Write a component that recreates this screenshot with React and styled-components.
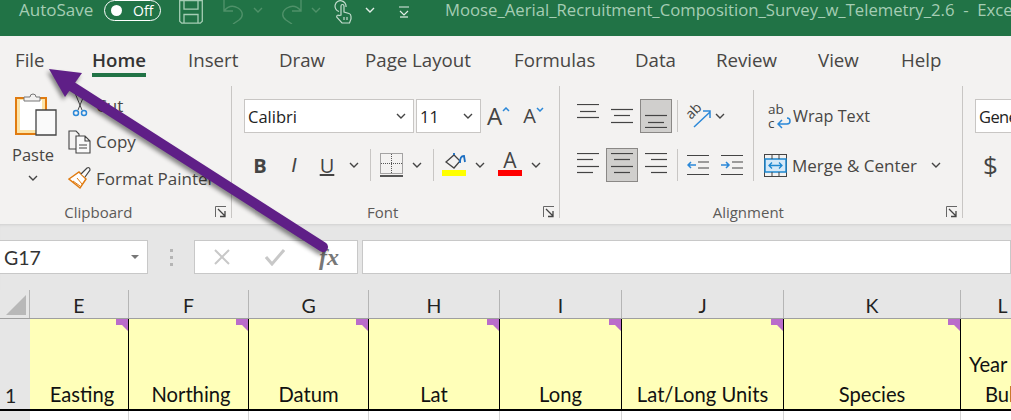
import React from 'react'
import styled, { createGlobalStyle } from 'styled-components'

const ui = '"Open Sans", "Noto Sans", sans-serif'
const sheet = 'Lato, "Liberation Sans", sans-serif'

const Global = createGlobalStyle`
  html, body { margin: 0; padding: 0; background: #fff; }
  body { width: 1011px; height: 420px; overflow: hidden; font-family: ${ui}; }
`

const tabs = [
  ['File', 77], ['Home', 96], ['Insert', 91], ['Draw', 86], ['Page Layout', 149],
  ['Formulas', 121], ['Data', 81], ['Review', 102], ['View', 83], ['Help', 60],
]

const columns = [
  ['E', 99, 'Easting', 6], ['F', 120, 'Northing', 5], ['G', 120, 'Datum'], ['H', 131, 'Lat'],
  ['I', 122, 'Long'], ['J', 162, 'Lat/Long Units'], ['K', 177, 'Species'],
]

const ChevronSvg = styled.svg`
  width: 10px;
  height: 6px;
  flex-shrink: 0;
`

function Chevron({ color = '#444' }) {
  return (
    <ChevronSvg viewBox="0 0 10 6">
      <path d="M1 1l4 4 4-4" fill="none" stroke={color} strokeWidth="1.4" />
    </ChevronSvg>
  )
}

function Launcher() {
  return (
    <svg width="12" height="12" viewBox="0 0 12 12">
      <path d="M.5 11V.5H11" fill="none" stroke="#666" />
      <path d="M3 3l7 7M10 5v5.5H5" fill="none" stroke="#444" strokeWidth="1.3" />
    </svg>
  )
}

function Lines({ rows }) {
  return (
    <svg width="22" height="24" viewBox="0 0 22 24">
      {rows.map(([x1, x2, y]) => (
        <path key={y} d={`M${x1} ${y}.5H${x2}`} stroke="#444" strokeWidth="1.2" />
      ))}
    </svg>
  )
}

function App() {
  return (
    <Page>
      <Global />
      <TitleBar>
        <AutoSave>AutoSave</AutoSave>
        <Toggle><Knob />Off</Toggle>
        <QuickIcons>
          <svg width="24" height="24" viewBox="0 0 24 24" fill="none" stroke="#a5cdb4" strokeWidth="1.3">
            <path d="M.7.7h22.6v20.5l-2 2H2.7l-2-2z" />
            <path d="M5 .7v8.5h14V.7M5 23v-8.500h14V23" />
          </svg>
          <Spacer $width={19} />
          <svg width="23" height="24" viewBox="0 0 23 24" fill="none" stroke="#4f9169" strokeWidth="1.4">
            <path d="M2 0v11h9M2 11c4-5 9-6 14-3 6 4 5 9 1 12l-6 4" />
          </svg>
          <Spacer $width={8} />
          <Chevron color="#4f9169" />
          <Spacer $width={17} />
          <svg width="23" height="24" viewBox="0 0 23 24" fill="none" stroke="#4f9169" strokeWidth="1.4">
            <path d="M21 0v11h-9M21 11c-4-5-9-6-14-3-6 4-5 9-1 12l6 4" />
          </svg>
          <Spacer $width={8} />
          <Chevron color="#4f9169" />
          <Spacer $width={13} />
          <svg width="18" height="24" viewBox="0 0 18 24" fill="none" stroke="#c3dccd" strokeWidth="1.2">
            <path d="M5 11.500A5.500 5.500 0 1 1 12 7M7 15V6a1.500 1.500 0 0 1 3 0v6l5 1.500c1.500.5 2 1.500 2 3V19l-1.500 4H8L3 17.500c-1-2 1-3 2-2z" />
            <path d="M10 17v3M13 17v3" />
          </svg>
          <Spacer $width={13} />
          <Chevron color="#e2eee7" />
          <Spacer $width={23} />
          <svg width="12" height="12" viewBox="0 0 12 12" fill="none" stroke="#e2eee7" strokeWidth="1.2">
            <path d="M1 1h10M2 5l4 4 4-4" />
            <path d="M2 11h8" />
          </svg>
        </QuickIcons>
        <DocTitle>Moose_Aerial_Recruitment_Composition_Survey_w_Telemetry_2.6&nbsp; - &nbsp;Excel</DocTitle>
      </TitleBar>

      <TabBar>
        {tabs.map(([name, width]) => (
          <Tab key={name} $width={width} $active={name === 'Home'}><span>{name}</span></Tab>
        ))}
      </TabBar>

      <Ribbon>
        <Group $width={232}>
          <ClipboardBody>
            <PasteButton>
              <svg width="42" height="44" viewBox="0 0 42 44">
                <path d="M1 6h30v36H1z" fill="#fce4a8" stroke="#e07b10" strokeWidth="2" />
                <path d="M5 8h22v30H5z" fill="#fff" />
                <path d="M9 9V5h6a3 3 0 0 1 6 0h4v4z" fill="#f3f2f1" stroke="#777" />
                <path d="M21 18h20v25H21z" fill="#fafafa" stroke="#444" strokeWidth="1.3" />
              </svg>
              <PasteLabel>Paste</PasteLabel>
              <Chevron />
            </PasteButton>
            <ClipboardList>
              <ClipRow>
                <svg width="16" height="24" viewBox="0 0 16 24" fill="none">
                  <path d="M3 0l7 17M13 0L6 17" stroke="#444" />
                  <circle cx="4" cy="20" r="2.500" stroke="#2b88d8" strokeWidth="1.500" />
                  <circle cx="12" cy="20" r="2.500" stroke="#2b88d8" strokeWidth="1.500" />
                </svg>
                Cut
              </ClipRow>
              <ClipRow>
                <svg width="24" height="24" viewBox="0 0 24 24" fill="none" stroke="#444" strokeWidth="1.1">
                  <path d="M8 19H1V1h7l3 3v3" />
                  <path d="M8 6h9l5 5v12H8zM17 6v5h5M11 15h8M11 18h8" fill="#fafafa" />
                </svg>
                Copy
              </ClipRow>
              <ClipRow>
                <svg width="24" height="24" viewBox="0 0 24 24" fill="none">
                  <path d="M1 13l10-7 7 7-6 9z" fill="#fff" stroke="#e07b10" strokeWidth="1.500" />
                  <path d="M5 15l7 5M9 12l5 6" stroke="#e07b10" />
                  <path d="M13 8l6-6c2-1 3 0 3 2l-5 7" fill="#fafafa" stroke="#444" strokeWidth="1.200" />
                </svg>
                Format Painter
              </ClipRow>
            </ClipboardList>
          </ClipboardBody>
          <GroupLabel $ratio={1.47}><span />Clipboard<Launcher /></GroupLabel>
        </Group>

        <Group $width={328}>
          <GroupBody $left={12}>
            <ToolRow>
              <Combo $width={170}>Calibri<Chevron /></Combo>
              <Combo $width={65} $left={2}>11<Chevron /></Combo>
              <FontStep $size={24} $left={6}>A<Caret viewBox="0 0 8 5"><path d="M1 4l3-3 3 3" /></Caret></FontStep>
              <FontStep $size={20} $left={13}>A<Caret viewBox="0 0 8 5"><path d="M1 1l3 3 3-3" /></Caret></FontStep>
            </ToolRow>
            <ToolRow $top={15}>
              <Glyph $width={30} $left={1} $bold>B</Glyph>
              <Glyph $width={38} $italic>I</Glyph>
              <Glyph $width={28} $under>U</Glyph>
              <Spacer $width={8} />
              <Chevron />
              <VRule $left={11} $right={9} />
              <svg width="23" height="24" viewBox="0 0 23 24" fill="none" stroke="#555" strokeDasharray="1 1">
                <path d="M.5.500h22v20H.5zM11.500 1v19M1 10.500h21" />
                <path d="M0 23h23" stroke="#222" strokeWidth="1.500" strokeDasharray="none" />
              </svg>
              <Spacer $width={9} />
              <Chevron />
              <VRule $left={11} $right={8} />
              <Swatched $color="#ffff00">
                <svg width="24" height="18" viewBox="0 0 24 18" fill="none">
                  <path d="M4 10l8-7 6 6-6 7z" stroke="#444" strokeWidth="1.300" />
                  <path d="M12 3V1M18 11c0-5 1-7 4-7l1 6" stroke="#1b6ec2" strokeWidth="1.800" />
                </svg>
              </Swatched>
              <Spacer $width={9} />
              <Chevron />
              <Spacer $width={13} />
              <Swatched $color="#ff0000"><ColorA>A</ColorA></Swatched>
              <Spacer $width={9} />
              <Chevron />
            </ToolRow>
          </GroupBody>
          <GroupLabel $ratio={1.16}><span />Font<Launcher /></GroupLabel>
        </Group>

        <Group $width={403}>
          <GroupBody $left={12}>
            <AlignSplit>
              <AlignGrid>
                <ToolRow>
                  <AlignButton><Lines rows={[[0, 22, 0], [3, 19, 7], [0, 22, 13]]} /></AlignButton>
                  <AlignButton><Lines rows={[[0, 22, 5], [3, 19, 11], [0, 22, 18]]} /></AlignButton>
                  <AlignButton $on><Lines rows={[[0, 22, 11], [3, 19, 18], [0, 22, 23]]} /></AlignButton>
                  <VRule $left={3} $right={8} />
                  <OrientIcon width="25" height="26" viewBox="0 0 25 26" fill="none">
                    <path d="M8 24L24 9M17 8h7v7" stroke="#2b88d8" strokeWidth="1.500" />
                    <text fontSize="14" fill="#444" fontFamily="Open Sans" transform="translate(5 17) rotate(-45)">ab</text>
                  </OrientIcon>
                  <Spacer $width={4} />
                  <Chevron />
                </ToolRow>
                <ToolRow $top={15}>
                  <AlignButton><Lines rows={[[0, 22, 0], [0, 16, 6], [0, 22, 13], [0, 16, 19]]} /></AlignButton>
                  <AlignButton $on><Lines rows={[[0, 22, 0], [3, 19, 6], [0, 22, 13], [3, 19, 19]]} /></AlignButton>
                  <AlignButton><Lines rows={[[0, 22, 0], [6, 22, 6], [0, 22, 13], [6, 22, 19]]} /></AlignButton>
                  <VRule $left={3} $right={9} />
                  <svg width="22" height="22" viewBox="0 0 22 22" fill="none">
                    <path d="M0 1.500h22M0 20.500h22M11 8h11M11 14h11" stroke="#444" strokeWidth="1.200" />
                    <path d="M9 11H1M4 8l-3 3 3 3" stroke="#2b88d8" strokeWidth="1.500" />
                  </svg>
                  <Spacer $width={12} />
                  <svg width="22" height="22" viewBox="0 0 22 22" fill="none">
                    <path d="M0 1.500h22M0 20.500h22M11 8h11M11 14h11" stroke="#444" strokeWidth="1.200" />
                    <path d="M0 11h8M5 8l3 3-3 3" stroke="#2b88d8" strokeWidth="1.500" />
                  </svg>
                </ToolRow>
              </AlignGrid>
              <BigRule />
              <WrapColumn>
                <WrapRow>
                  <WrapGlyph>
                    <span>ab</span>
                    <span>c</span>
                    <svg width="14" height="12" viewBox="0 0 14 12" fill="none">
                      <path d="M1 7h9c4 0 4-6 0-6M5 3L1 7l4 4" stroke="#2b88d8" strokeWidth="1.500" />
                    </svg>
                  </WrapGlyph>
                  Wrap Text
                </WrapRow>
                <MergeRow>
                  <svg width="23" height="23" viewBox="0 0 23 23" fill="none">
                    <rect x=".5" y=".5" width="22" height="22" stroke="#444" />
                    <rect x="1" y="5" width="21" height="13" fill="#d6e9f8" stroke="#1e88d0" strokeWidth="1.500" />
                    <path d="M8 1v4M15 1v4M8 18v4M15 18v4" stroke="#444" />
                    <path d="M5 11.500h13M8 8.500l-3 3 3 3M15 8.500l3 3-3 3" stroke="#1e88d0" strokeWidth="1.300" />
                  </svg>
                  Merge &amp; Center
                  <Spacer $width={4} />
                  <Chevron />
                </MergeRow>
              </WrapColumn>
            </AlignSplit>
          </GroupBody>
          <GroupLabel $ratio={1.14}><span />Alignment<Launcher /></GroupLabel>
        </Group>

        <NumberGroup>
          <Combo $width={60} $tight>General</Combo>
          <Dollar>$</Dollar>
        </NumberGroup>
      </Ribbon>

      <FormulaBar>
        <NameBox>G17<DownTriangle /></NameBox>
        <Grip><i /><i /><i /></Grip>
        <FormulaButtons>
          <svg width="18" height="18" viewBox="0 0 18 18"><path d="M2 2l14 14M16 2L2 16" stroke="#c8c8c8" strokeWidth="2" /></svg>
          <svg width="20" height="18" viewBox="0 0 20 18" fill="none"><path d="M1 9l6 7L19 2" stroke="#c8c8c8" strokeWidth="3" /></svg>
          <Fx>fx</Fx>
        </FormulaButtons>
        <FormulaInput />
      </FormulaBar>

      <HeaderRow>
        <Corner><CornerMark /></Corner>
        {columns.map(([letter, width]) => (
          <ColHead key={letter} $width={width}>{letter}</ColHead>
        ))}
        <ColHead $width={84}>L</ColHead>
      </HeaderRow>

      <DataRow>
        <RowHead>1</RowHead>
        {columns.map(([letter, width, label, nudge]) => (
          <Cell key={letter} $width={width} $nudge={nudge}>{label}<CommentMark /></Cell>
        ))}
        <Cell $width={84} $lead={8}>
          <span>Year</span>
          <CellIndent>Bul</CellIndent>
        </Cell>
      </DataRow>

      <BlankRow>
        <RowStub />
        {columns.map(([letter, width]) => <BlankCell key={letter} $width={width} />)}
      </BlankRow>

      <ArrowLayer width="1011" height="420" viewBox="0 0 1011 420">
        <path d="M323 247L68 84" stroke="#5f1f87" strokeWidth="10" strokeLinecap="round" />
        <path d="M49 69l33 4-17 24z" fill="#5f1f87" />
      </ArrowLayer>
    </Page>
  )
}

export default App

const Page = styled.div`
  position: relative;
  width: 1011px;
  height: 420px;
  overflow: hidden;
  background: #fff;
`
const TitleBar = styled.div`
  height: 36px;
  background: #217346;
  display: flex;
  align-items: flex-start;
  padding-left: 19px;
  white-space: nowrap;
`
const AutoSave = styled.div`
  font-size: 17px;
  line-height: 20px;
  color: #a5cdb4;
  width: 85px;
  flex-shrink: 0;
`
const Toggle = styled.div`
  width: 57px;
  height: 21px;
  border: 1.5px solid #fff;
  border-radius: 11px;
  display: flex;
  align-items: center;
  gap: 11px;
  padding-left: 6px;
  box-sizing: border-box;
  color: #fff;
  font-size: 14px;
  flex-shrink: 0;
`
const Knob = styled.div`
  width: 11px;
  height: 11px;
  border-radius: 50%;
  background: #fff;
`
const QuickIcons = styled.div`
  display: flex;
  align-items: center;
  width: 266px;
  height: 24px;
  margin-left: 18px;
  flex-shrink: 0;
  > ${ChevronSvg} { margin-bottom: 4px; }
`
const DocTitle = styled.div`
  font-size: 16.7px;
  line-height: 20px;
  color: #a5cdb4;
  flex-shrink: 0;
`
const TabBar = styled.div`
  height: 42px;
  background: #f3f2f1;
  display: flex;
  padding-left: 15px;
`
const Tab = styled.div`
  width: ${(p) => p.$width}px;
  flex-shrink: 0;
  font-size: 18.7px;
  line-height: 25px;
  font-weight: ${(p) => (p.$active ? 600 : 400)};
  color: ${(p) => (p.$active ? '#333' : '#484644')};
  padding-top: 11px;
  span {
    display: inline-block;
    height: 30px;
    box-sizing: border-box;
    border-bottom: ${(p) => (p.$active ? '4px solid #217346' : 'none')};
  }
`
const Ribbon = styled.div`
  height: 146px;
  background: #f3f2f1;
  display: flex;
  padding-top: 8px;
  box-sizing: border-box;
  color: #484644;
`
const Group = styled.div`
  width: ${(p) => p.$width}px;
  height: 132px;
  flex-shrink: 0;
  box-sizing: border-box;
  border-right: 1px solid #c8c6c4;
  display: flex;
  flex-direction: column;
  justify-content: space-between;
`
const GroupBody = styled.div`
  padding: 13px 0 0 ${(p) => p.$left}px;
`
const GroupLabel = styled.div`
  display: grid;
  grid-template-columns: 1fr auto ${(p) => p.$ratio}fr;
  grid-template-rows: 12px;
  align-items: center;
  justify-items: end;
  height: 12px;
  line-height: 12px;
  padding-right: 4px;
  font-size: 15px;
  color: #5c5a58;
`
const ClipboardBody = styled.div`
  display: flex;
  padding: 6px 0 0 13px;
`
const PasteButton = styled.div`
  width: 40px;
  display: flex;
  flex-direction: column;
  align-items: center;
  svg:first-child { margin-left: 6px; flex-shrink: 0; }
`
const PasteLabel = styled.div`
  font-size: 16.500px;
  line-height: 22px;
  margin: 8px 0 9px;
  color: #484644;
`
const ClipboardList = styled.div`
  margin-left: 15px;
  padding-top: 1px;
  display: flex;
  flex-direction: column;
  gap: 12.500px;
`
const ClipRow = styled.div`
  display: flex;
  align-items: center;
  gap: 4px;
  height: 24px;
  font-size: 17px;
  white-space: nowrap;
  color: #484644;
  svg { width: 24px; }
`
const ToolRow = styled.div`
  display: flex;
  align-items: center;
  height: 34px;
  margin-top: ${(p) => p.$top || 0}px;
`
const Combo = styled.div`
  width: ${(p) => p.$width}px;
  height: 34px;
  margin-left: ${(p) => p.$left || 0}px;
  box-sizing: border-box;
  border: 1px solid #c8c6c4;
  background: #fff;
  display: flex;
  align-items: center;
  justify-content: space-between;
  padding: 0 7px 0 3px;
  font-size: 16.500px;
  letter-spacing: ${(p) => (p.$tight ? '-0.6px' : '0')};
  color: #222;
  overflow: hidden;
  white-space: nowrap;
  flex-shrink: 0;
`
const FontStep = styled.div`
  display: flex;
  font-size: ${(p) => p.$size}px;
  line-height: 34px;
  margin-left: ${(p) => p.$left}px;
  color: #444;
`
const Caret = styled.svg`
  width: 8px;
  height: 5px;
  margin-top: 8px;
  fill: none;
  stroke: #2b88d8;
  stroke-width: 1.500;
`
const Glyph = styled.div`
  width: ${(p) => p.$width}px;
  margin-left: ${(p) => p.$left || 0}px;
  text-align: center;
  font-size: 20px;
  color: #444;
  font-weight: ${(p) => (p.$bold ? 700 : 400)};
  font-style: ${(p) => (p.$italic ? 'italic' : 'normal')};
  text-decoration: ${(p) => (p.$under ? 'underline' : 'none')};
  font-family: ${(p) => (p.$italic ? '"Liberation Sans", sans-serif' : ui)};
`
const VRule = styled.div`
  width: 1px;
  height: 32px;
  background: #c8c6c4;
  margin: 0 ${(p) => p.$right}px 0 ${(p) => p.$left}px;
  flex-shrink: 0;
`
const Spacer = styled.div`
  width: ${(p) => p.$width}px;
  flex-shrink: 0;
`
const Swatched = styled.div`
  width: 24px;
  display: flex;
  flex-direction: column;
  align-items: center;
  justify-content: flex-end;
  height: 26px;
  align-self: flex-start;
  margin-top: 2px;
  &::after {
    content: '';
    width: 24px;
    height: 6px;
    background: ${(p) => p.$color};
    flex-shrink: 0;
  }
`
const ColorA = styled.div`
  font-size: 21px;
  line-height: 20px;
  color: #444;
`
const OrientIcon = styled.svg`
  overflow: visible;
  flex-shrink: 0;
`
const AlignSplit = styled.div`
  display: flex;
`
const AlignGrid = styled.div`
  width: 181px;
`
const AlignButton = styled.div`
  width: 32px;
  height: 34px;
  box-sizing: border-box;
  margin-right: 2px;
  display: flex;
  align-items: center;
  justify-content: center;
  background: ${(p) => (p.$on ? '#d0cfcd' : 'transparent')};
  border: 1px solid ${(p) => (p.$on ? '#8a8886' : 'transparent')};
`
const BigRule = styled.div`
  width: 1px;
  height: 91px;
  margin-top: -9px;
  background: #c8c6c4;
`
const WrapColumn = styled.div`
  display: flex;
  flex-direction: column;
  margin-left: 10px;
  gap: 15px;
`
const WrapRow = styled.div`
  display: flex;
  align-items: center;
  height: 34px;
  padding-left: 4px;
  gap: 2px;
  font-size: 16.200px;
  white-space: nowrap;
`
const WrapGlyph = styled.div`
  width: 23px;
  height: 28px;
  display: grid;
  grid-template-columns: 9px 14px;
  grid-template-rows: 14px 14px;
  font-size: 13.500px;
  line-height: 14px;
  color: #444;
  span:first-child { grid-column: 1 / 3; }
  svg { align-self: center; }
`
const MergeRow = styled.div`
  display: flex;
  align-items: center;
  height: 34px;
  gap: 5px;
  font-size: 17px;
  white-space: nowrap;
`
const NumberGroup = styled.div`
  padding: 13px 0 0 12px;
  display: flex;
  flex-direction: column;
  gap: 15px;
`
const Dollar = styled.div`
  font-size: 26px;
  line-height: 34px;
  margin-left: 8px;
  color: #444;
`
const FormulaBar = styled.div`
  height: 66px;
  background: #e6e6e6;
  box-shadow: inset 0 3px 3px -2px #cfcfcf;
  display: flex;
  padding-top: 16px;
  box-sizing: border-box;
`
const NameBox = styled.div`
  width: 148px;
  height: 34px;
  box-sizing: border-box;
  background: #fff;
  border: 1px solid #c8c8c8;
  border-left: none;
  display: flex;
  align-items: center;
  justify-content: space-between;
  padding: 0 8px 0 4px;
  font-family: ${sheet};
  font-size: 19.500px;
  color: #333;
`
const DownTriangle = styled.div`
  border: 4px solid transparent;
  border-top: 4px solid #777;
  border-bottom: none;
  width: 0;
`
const Grip = styled.div`
  width: 46px;
  display: flex;
  flex-direction: column;
  align-items: center;
  gap: 4px;
  padding-top: 9px;
  i { width: 3px; height: 3px; background: #b5b5b5; }
`
const FormulaButtons = styled.div`
  width: 164px;
  height: 34px;
  box-sizing: border-box;
  background: #fff;
  border: 1px solid #c8c8c8;
  display: flex;
  align-items: center;
  justify-content: space-between;
  padding: 0 18px 0 18px;
`
const Fx = styled.div`
  font-family: "Liberation Serif", serif;
  font-style: italic;
  font-weight: 700;
  font-size: 24px;
  color: #777;
`
const FormulaInput = styled.div`
  flex: 1;
  height: 34px;
  margin-left: 4px;
  box-sizing: border-box;
  background: #fff;
  border: 1px solid #c8c8c8;
`
const HeaderRow = styled.div`
  height: 28px;
  background: #e6e6e6;
  border-bottom: 1px solid #9f9f9f;
  display: flex;
`
const Corner = styled.div`
  width: 30px;
  flex-shrink: 0;
  box-sizing: border-box;
  border-right: 1px solid #b5b5b5;
  display: flex;
  align-items: flex-end;
  justify-content: flex-end;
  padding: 0 3px 3px 0;
`
const CornerMark = styled.div`
  width: 20px;
  height: 20px;
  background: #b8b8b8;
  clip-path: polygon(100% 0, 100% 100%, 0 100%);
`
const ColHead = styled.div`
  width: ${(p) => p.$width}px;
  flex-shrink: 0;
  box-sizing: border-box;
  border-right: 1px solid #b5b5b5;
  text-align: center;
  font-family: ${sheet};
  font-size: 19.500px;
  line-height: 31px;
  color: #222;
`
const DataRow = styled.div`
  height: 92px;
  box-sizing: border-box;
  border-bottom: 2px solid #000;
  display: flex;
`
const RowHead = styled.div`
  width: 30px;
  flex-shrink: 0;
  box-sizing: border-box;
  background: #e6e6e6;
  display: flex;
  align-items: flex-end;
  padding: 0 0 2px 5px;
  font-family: ${sheet};
  font-size: 19.500px;
  color: #222;
`
const Cell = styled.div`
  position: relative;
  width: ${(p) => p.$width}px;
  flex-shrink: 0;
  box-sizing: border-box;
  background: #ffffb9;
  border-right: 1px solid #000;
  display: flex;
  flex-direction: column;
  justify-content: flex-end;
  align-items: ${(p) => (p.$lead ? 'flex-start' : 'center')};
  padding-left: ${(p) => p.$lead || p.$nudge || 0}px;
  font-family: ${sheet};
  font-size: 20.200px;
  line-height: 30px;
  color: #111;
  white-space: nowrap;
`
const CellIndent = styled.span`
  margin-left: 16px;
`
const CommentMark = styled.div`
  position: absolute;
  top: 0;
  right: 0;
  width: 12px;
  height: 12px;
  background: #ba6ccb;
  clip-path: polygon(0 0, 100% 0, 100% 100%, 6px 6px, 0 6px);
`
const BlankRow = styled.div`
  height: 9px;
  display: flex;
`
const RowStub = styled.div`
  width: 30px;
  background: #e6e6e6;
  flex-shrink: 0;
`
const BlankCell = styled.div`
  width: ${(p) => p.$width}px;
  flex-shrink: 0;
  box-sizing: border-box;
  border-right: 1px solid #d4d4d4;
`
const ArrowLayer = styled.svg`
  position: absolute;
  top: 0;
  left: 0;
  pointer-events: none;
  filter: drop-shadow(-2px 3px 2px rgba(0, 0, 0, 0.45));
`
